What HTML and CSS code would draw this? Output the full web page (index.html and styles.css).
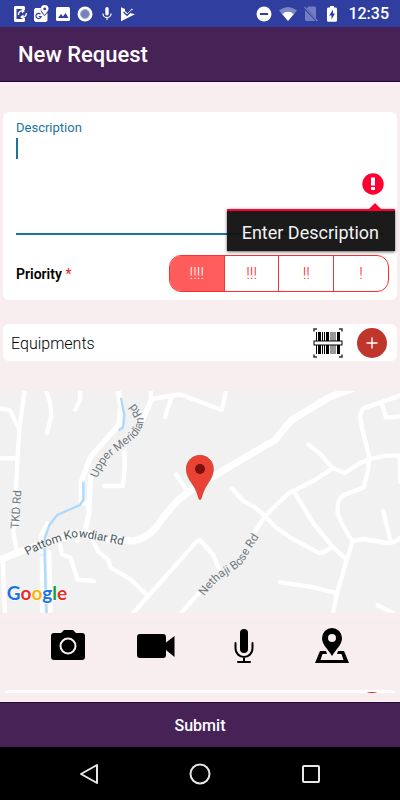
FILE: index.html
```html
<!DOCTYPE html>
<html lang="en">

<head>
    <meta charset="UTF-8">
    <meta name="viewport" content="width=device-width, initial-scale=1.0">
    <title>New Request</title>
    <link rel="stylesheet" href="styles.css">
</head>

<body>
    <div class="status-bar">
        <div class="status-icons">
            <svg width="13" height="18" viewBox="0 0 13 18">
                <path fill="#fff" d="M1 1h9l1 1v3H9V4H2.500v10H9v-1h2v3l-1 1H1l-1-1V2z" />
                <path fill="none" stroke="#fff" stroke-width="1.300" d="M4.500 10a3.500 3.500 0 0 1 4-4M12.300 8a3.500 3.500 0 0 1-4 4" />
                <path fill="#fff" d="M7.500 3.500l3.500 2.500-3 2.500zM9.500 9.500v5L6 12z" />
            </svg>
            <svg width="15" height="18" viewBox="0 0 15 18">
                <path fill="#fff" d="M1.500 3H7c-1 3 1 5.500 3.500 8l3-3v7.500l-1.500 1.500H1.500L0 15.500v-11z" />
                <path fill="#fff" fill-rule="evenodd" d="M10.700 0A3.800 3.800 0 0 1 14.500 3.800c0 2.200-1.900 3.600-3.800 6.400-1.900-2.800-3.800-4.200-3.800-6.400A3.800 3.800 0 0 1 10.700 0zm0 2.500a1.400 1.400 0 1 0 0 2.800 1.400 1.400 0 0 0 0-2.800z" />
                <path fill="none" stroke="#303f9f" stroke-width="1.200" d="M6.500 9.200a2.600 2.600 0 1 0 .6 2.300H4.800" />
            </svg>
            <svg width="14" height="18" viewBox="0 0 14 18">
                <rect y="2" width="14" height="14" rx="1.500" fill="#fff" />
                <path fill="#303f9f" d="M2 13l3-4 2 2.500L9.500 8 12.500 13z" />
            </svg>
            <svg width="16" height="18" viewBox="0 0 16 18">
                <circle cx="8" cy="9" r="7.500" fill="#fff" />
                <circle cx="8" cy="9" r="4.500" fill="#7681c1" stroke="#a5acd8" />
            </svg>
            <svg width="14" height="18" viewBox="0 0 14 18">
                <rect x="5.300" y="2" width="3.400" height="8.500" rx="1.700" fill="#fff" />
                <path fill="none" stroke="#fff" stroke-width="1.200" d="M2.900 8.500a4.100 4.100 0 0 0 8.200 0M7 12.600V15" />
            </svg>
            <svg width="14" height="18" viewBox="0 0 14 18">
                <path fill="#fff" d="M0 2.200l4 1.800v2l2.500 2.300L11 3.500l.8 1L9 8l5 1.300-14 7z" />
                <path fill="none" stroke="#303f9f" stroke-width="1.300" d="M2.500 7l3.500 3.300L11 5.500" />
            </svg>
        </div>
        <div class="status-icons">
            <svg width="16" height="18" viewBox="0 0 16 18">
                <circle cx="8" cy="9" r="7.500" fill="#fff" />
                <path stroke="#303f9f" stroke-width="2" d="M4 9h8" />
            </svg>
            <svg width="18" height="18" viewBox="0 0 18 18">
                <path fill="#7d87c4" d="M0 5.500Q9-1.500 18 5.500L9 16z" />
                <path fill="#fff" d="M3.200 9Q9 4.500 14.800 9L9 16z" />
            </svg>
            <svg width="14" height="18" viewBox="0 0 14 18">
                <path fill="#737dbf" d="M4.500 1.500H11l1 1v11L2.800 3.200zM1 5l10.500 11H2l-1-1z" />
                <path stroke="#737dbf" stroke-width="1.200" d="M.5 2l13 14" />
            </svg>
            <svg width="14" height="18" viewBox="0 0 14 18">
                <path fill="#fff" d="M5 1h4v1.500h2l1 1V16l-1 .8H3L2 16V3.500l1-1h2z" />
                <path fill="#303f9f" d="M8 4.500L4.200 10.500h2.300V14.500l3.500-6H8z" />
            </svg>
            <span class="clock">12:35</span>
        </div>
    </div>

    <header class="app-bar">
        <h1>New Request</h1>
    </header>

    <main class="content">
        <form class="request-form" id="request-form">
            <section class="card details-card">
                <div class="field">
                    <label for="description">Description</label>
                    <textarea id="description" name="description"></textarea>
                    <span class="caret"></span>
                    <svg class="error-icon" width="22" height="22" viewBox="0 0 22 22">
                        <circle cx="11" cy="11" r="10.700" fill="#ff0031" />
                        <path fill="#fff" d="M9 4.500h4v8H9zM9 14h4v3H9z" />
                    </svg>
                    <div class="error-tip" role="alert">Enter Description</div>
                </div>

                <div class="priority-row">
                    <span class="priority-label" id="priority-label">Priority <span class="required">*</span></span>
                    <div class="segments" role="radiogroup" aria-labelledby="priority-label">
                        <label class="segment"><input type="radio" name="priority" value="4" checked><span>!!!!</span></label>
                        <label class="segment"><input type="radio" name="priority" value="3"><span>!!!</span></label>
                        <label class="segment"><input type="radio" name="priority" value="2"><span>!!</span></label>
                        <label class="segment"><input type="radio" name="priority" value="1"><span>!</span></label>
                    </div>
                </div>
            </section>

            <section class="card equipment-card">
                <h2>Equipments</h2>
                <button type="button" class="icon-button" aria-label="Scan barcode">
                    <svg width="30" height="30" viewBox="0 0 30 30">
                        <path fill="none" stroke="#333" stroke-width="1.500" d="M1 3.500V1h3M26 1h3v2.500M1 26.500V29h3M26 29h3v-2.500" />
                        <path fill="#000" d="M3 4h1v22H3zM5 4h3v22H5zM9 4h1v22H9zM11 4h1v22h-1zM13 4h3v22h-3zM24 4h3v22h-3z" />
                        <path fill="#999" d="M17 4h6v22h-6z" />
                        <rect x="1" y="13" width="28" height="4" fill="#fff" stroke="#000" />
                    </svg>
                </button>
                <button type="button" class="add-button" aria-label="Add equipment">
                    <svg width="12" height="12" viewBox="0 0 12 12">
                        <path stroke="#fff" stroke-width="1.400" d="M6 .5v11M.5 6h11" />
                    </svg>
                </button>
            </section>
        </form>

        <svg class="map" viewBox="0 18 1200 666" preserveAspectRatio="xMidYMid slice">
            <defs>
                <path id="upper-meridian" d="M292 280Q308 240 328 218L398 164Q430 136 430 104Q424 76 386 34" />
                <path id="pattom-kowdiar" d="M82 512Q160 470 232 456Q300 464 400 488" />
                <path id="nethaji-bose" d="M612 634Q640 596 676 570Q715 550 730 532Q748 500 790 436" />
            </defs>
            <rect y="18" width="1200" height="666" fill="#f1f1f1" />
            <!-- main road -->
            <path class="road wide" d="M0 524L80 492L180 460L260 445L320 462L400 468Q440 460 470 425Q520 350 570 318L680 250L825 165L875 105L985 38L1060 10" />
            <!-- side roads -->
            <path class="road" d="M75 10L58 130L40 440L50 500M0 70L30 76L55 128M0 220H50M135 10L150 50L154 95L141 143M241 10L240 45L226 74M8 520L15 690M126 520V690M148 500L151 690M142 415L124 450V500" />
            <path class="road middle" d="M354 10L362 60L358 118L272 215L244 290V352L262 356M425 110L445 65L455 42M272 270L266 390L254 440" />
            <path class="road" d="M455 42L540 28L665 75L680 10M452 10L453 45M513 40L495 96M373 200L374 250L368 303H312M528 268L555 308M232 440V468M180 480L186 508L212 518L232 584L282 588M275 460L295 500L325 525L332 548L390 582L445 633L400 684M445 633L590 470L600 465L640 510L660 560M600 620L538 690" />
            <path class="road" d="M925 178L962 208L998 250L945 285L865 325L795 393L765 440M695 310L730 348L765 367L795 393L825 425L870 457L955 503Q970 508 995 485M885 325L940 415L995 482L1040 525M998 250L1035 264L1080 234L1110 222L1160 212H1200M1200 32L1090 70L1080 90L1085 125L1108 215L1104 260L1090 308L1030 330Q1010 345 1013 385Q1025 420 1058 470L1040 525L1010 628L998 690M1147 60L1158 98L1200 94M1058 468L1090 462L1160 474Q1185 475 1205 455M1150 378L1172 470M840 592L930 605L1010 624M1133 661L1180 684M1200 220V290" />
            <!-- river -->
            <path class="river" d="M363 38L373 90L369 128L356 136M250 290V345L240 360L172 390L148 420L134 460V520L140 690" />
            <text class="street"><textPath href="#upper-meridian">Upper Meridian Rd</textPath></text>
            <text class="street main"><textPath href="#pattom-kowdiar">Pattom Kowdiar Rd</textPath></text>
            <text class="street"><textPath href="#nethaji-bose">Nethaji Bose Rd</textPath></text>
            <text class="street" transform="translate(56 432) rotate(-86)">TKD Rd</text>
            <!-- marker -->
            <path fill="#ea4335" stroke="#c5392d" stroke-width="2" d="M600 211c23 0 40 18 40 41 0 27-18 42-27 62-8 17-9 30-13 30s-5-13-13-30c-9-20-28-35-28-62 0-23 18-41 41-41z" />
            <circle cx="600" cy="252" r="15" fill="#7a110c" />
            <text class="google" x="20" y="645"><tspan fill="#1a73e8">G</tspan><tspan fill="#ea2c25">o</tspan><tspan fill="#fbb605">o</tspan><tspan fill="#1a73e8">g</tspan><tspan fill="#0f9d3c">l</tspan><tspan fill="#ea2c25">e</tspan></text>
        </svg>

        <div class="attachments">
            <button type="button" aria-label="Take photo">
                <svg width="34" height="36" viewBox="0 0 34 36">
                    <path d="M3 5h7l3-3h9l3 3h6q3 0 3 3v21q0 3-3 3H3q-3 0-3-3V8q0-3 3-3z" />
                    <circle cx="17" cy="18" r="7.500" fill="none" stroke="#f8eeef" stroke-width="2" />
                </svg>
            </button>
            <button type="button" aria-label="Record video">
                <svg width="38" height="36" viewBox="0 0 38 36">
                    <path d="M3 6h23q3 0 3 3v5.500L37.500 8v21L29 22v5q0 3-3 3H3q-3 0-3-3V9q0-3 3-3z" />
                </svg>
            </button>
            <button type="button" aria-label="Record audio">
                <svg width="20" height="36" viewBox="0 0 20 36">
                    <rect x="6" y="1" width="8" height="24" rx="4" />
                    <path fill="none" stroke="#000" stroke-width="2" stroke-linecap="round" d="M1.500 15v5.500a8.500 8.500 0 0 0 17 0V15M10 29v5M4 34h12" />
                </svg>
            </button>
            <button type="button" aria-label="Add location">
                <svg width="34" height="36" viewBox="0 0 34 36">
                    <path fill-rule="evenodd" d="M17 0A10 10 0 0 1 27 10c0 7-6 11-10 18C13 21 7 17 7 10A10 10 0 0 1 17 0zm0 6a4 4 0 1 0 0 8 4 4 0 0 0 0-8z" />
                    <path fill-rule="evenodd" d="M5 23h6l1 3H7.500l-2 6h23l-2-6H22l1-3h6l5 12H0z" />
                </svg>
            </button>
        </div>

        <section class="card next-card">
            <button type="button" class="add-button" aria-label="Add item"></button>
        </section>
    </main>

    <button type="submit" form="request-form" class="submit-button">Submit</button>

    <nav class="nav-bar">
        <button type="button" aria-label="Back">
            <svg width="22" height="22" viewBox="0 0 22 22">
                <path d="M3 11L19 2v18z" />
            </svg>
        </button>
        <button type="button" aria-label="Home">
            <svg width="22" height="22" viewBox="0 0 22 22">
                <circle cx="11" cy="11" r="9.500" />
            </svg>
        </button>
        <button type="button" aria-label="Recent apps">
            <svg width="22" height="22" viewBox="0 0 22 22">
                <rect x="3" y="3" width="16" height="16" rx="1" />
            </svg>
        </button>
    </nav>
</body>

</html>
```
FILE: styles.css
```css
* {
    box-sizing: border-box;
}

body {
    display: flex;
    flex-direction: column;
    height: 100vh;
    margin: 0;
    font-family: Roboto, "Liberation Sans", sans-serif;
    background-color: #f8eeef;
    color: #000;
}

button {
    padding: 0;
    border: none;
    background: none;
    font-family: inherit;
    cursor: pointer;
}

svg {
    display: block;
}

.status-bar {
    display: flex;
    justify-content: space-between;
    flex: none;
    padding: 0 11px 0 14px;
    height: 27px;
    background-color: #303f9f;
}

.status-icons {
    display: flex;
    align-items: center;
    gap: 7px;
}

.clock {
    margin-left: 2px;
    color: #fff;
    font-size: 16px;
    font-weight: 500;
}

.app-bar {
    flex: none;
    padding: 15px 18px 13px;
    background-color: #472257;
    border-bottom: 1px solid #1c0632;
}

.app-bar h1 {
    margin: 0;
    color: #fff;
    font-size: 22px;
    font-weight: 500;
    line-height: 26px;
}

.content {
    flex: 1;
    margin-bottom: 9px;
    padding-top: 30px;
    overflow: hidden;
}

.request-form {
    display: flex;
    flex-direction: column;
    gap: 24px;
    margin-bottom: 30px;
}

.card {
    margin: 0 3px;
    background-color: #fff;
    border-radius: 6px;
}

.details-card {
    padding: 8px 8px 8px 13px;
}

.field {
    position: relative;
    margin-right: 5px;
}

.field label {
    display: block;
    color: #1b7599;
    font-size: 13px;
    line-height: 16px;
}

.field textarea {
    display: block;
    width: 100%;
    height: 99px;
    padding: 2px 0;
    border: none;
    border-bottom: 2px solid #1b7599;
    outline: none;
    resize: none;
    background: none;
    font: 18px Roboto, sans-serif;
}

.caret {
    position: absolute;
    top: 18px;
    left: 0;
    width: 2px;
    height: 21px;
    background-color: #1b7599;
}

.error-icon {
    position: absolute;
    top: 53px;
    right: 0;
}

.error-tip {
    position: absolute;
    top: 89px;
    right: -11px;
    padding: 9px 16px 5px 15px;
    border-top: 2px solid #ff0031;
    background-color: rgba(20, 20, 20, 0.97);
    box-shadow: 0 1px 3px rgba(0, 0, 0, 0.6);
    color: #f2f2f2;
    font-size: 18px;
    line-height: 26px;
}

.error-tip::before {
    content: "";
    position: absolute;
    top: -8px;
    right: 14px;
    border: 6px solid transparent;
    border-top: none;
    border-bottom-color: #ff0031;
}

.priority-row {
    display: flex;
    align-items: center;
    justify-content: space-between;
    margin-top: 20px;
}

.priority-label {
    font-size: 14px;
    font-weight: 600;
}

.required {
    color: #e8202a;
    font-weight: 400;
}

.segments {
    display: flex;
    width: 59%;
    height: 37px;
    overflow: hidden;
    border: 1px solid #ff2d2d;
    border-radius: 12px;
}

.segment {
    position: relative;
    flex: 1;
}

.segment + .segment {
    border-left: 1px solid #e83a3a;
}

.segment input {
    position: absolute;
    margin: 0;
    opacity: 0;
}

.segment span {
    display: flex;
    align-items: center;
    justify-content: center;
    height: 100%;
    color: #f22;
    font-size: 16px;
    font-weight: 300;
}

.segment input:checked + span {
    background-color: #ff5c5c;
    color: #fff;
}

.equipment-card {
    display: flex;
    align-items: center;
    gap: 14px;
    padding: 4px 10px 3px 8px;
}

.equipment-card h2 {
    flex: 1;
    margin: 0;
    font-size: 16px;
    font-weight: 300;
}

.add-button {
    display: flex;
    align-items: center;
    justify-content: center;
    width: 30px;
    height: 30px;
    border-radius: 50%;
    background-color: #c0362c;
}

.map {
    width: 100%;
    height: 222px;
}

.road {
    fill: none;
    stroke: #fff;
    stroke-width: 13;
    stroke-linecap: round;
    stroke-linejoin: round;
}

.road.middle {
    stroke-width: 16;
}

.road.wide {
    stroke-width: 21;
}

.river {
    fill: none;
    stroke: #abdaff;
    stroke-width: 7;
}

.street {
    fill: #74797e;
    stroke: #f5f5f5;
    stroke-width: 4px;
    paint-order: stroke;
    font-size: 35px;
}

.street.main {
    fill: #4c5960;
}

.google {
    stroke: #fff;
    stroke-width: 4px;
    paint-order: stroke;
    font-family: Lato, sans-serif;
    font-size: 57px;
    font-weight: 700;
}

.attachments {
    display: flex;
    margin-top: 9px;
    padding: 5px 24px 4px;
    border-top: 1px solid #f1ecee;
    border-bottom: 1px solid #f1ecee;
}

.attachments button {
    display: flex;
    flex: 1;
    justify-content: center;
}

.next-card {
    display: flex;
    justify-content: flex-end;
    margin-top: 21px;
    padding: 2px 10px;
}

.submit-button {
    flex: none;
    height: 45px;
    border-top: 1px solid #2b0d3d;
    background-color: #472257;
    color: #fff;
    font-size: 16px;
    font-weight: 500;
}

.nav-bar {
    display: flex;
    flex: none;
    align-items: center;
    justify-content: space-between;
    height: 53px;
    padding: 0 78px;
    background-color: #000;
}

.nav-bar svg {
    fill: none;
    stroke: #e8e8e8;
    stroke-width: 2;
    stroke-linejoin: round;
}
```
